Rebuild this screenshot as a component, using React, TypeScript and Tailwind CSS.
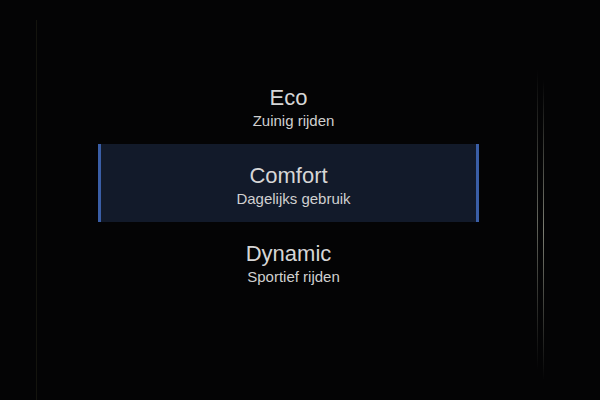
import React, { useState } from "react";

interface DriveMode {
  id: string;
  title: string;
  subtitle: string;
}

const modes: DriveMode[] = [
  { id: "eco", title: "Eco", subtitle: "Zuinig rijden" },
  { id: "comfort", title: "Comfort", subtitle: "Dagelijks gebruik" },
  { id: "dynamic", title: "Dynamic", subtitle: "Sportief rijden" },
];

export const App: React.FC = () => {
  const [selected, setSelected] = useState<string>("comfort");

  return (
    <div
      className="relative w-[600px] h-[400px] overflow-hidden bg-[#040405]"
      style={{ fontFamily: '"Liberation Sans", Arial, sans-serif' }}
    >
      {/* bezel edges */}
      <div className="absolute left-[36px] top-[20px] h-[380px] w-px bg-[#14140e]" />
      <div className="absolute left-[537px] top-[70px] h-[300px] w-px bg-gradient-to-b from-transparent via-[#7a7c72] to-transparent opacity-80" />
      <div className="absolute left-[543px] top-[80px] h-[300px] w-px bg-gradient-to-b from-transparent via-[#9a9c8e] to-transparent opacity-80" />

      <div className="flex flex-col pt-[66px] px-[98px] w-[479px] box-content">
        {modes.map((mode) => {
          const active = mode.id === selected;
          return (
            <button
              key={mode.id}
              onClick={() => setSelected(mode.id)}
              className={`flex h-[78px] w-[381px] flex-col items-center ${
                active
                  ? "bg-[#121a2a] border-x-[3px] border-[#3a5ea6]"
                  : "border-x-[3px] border-transparent"
              }`}
            >
              <span className="mt-[19px] text-[22px] leading-[26px] text-[#d6d6d6]">
                {mode.title}
              </span>
              <span className="mt-[1px] pl-[10px] text-[15px] leading-[18px] text-[#d0d0d0]">
                {mode.subtitle}
              </span>
            </button>
          );
        })}
      </div>
    </div>
  );
};

export default App;
